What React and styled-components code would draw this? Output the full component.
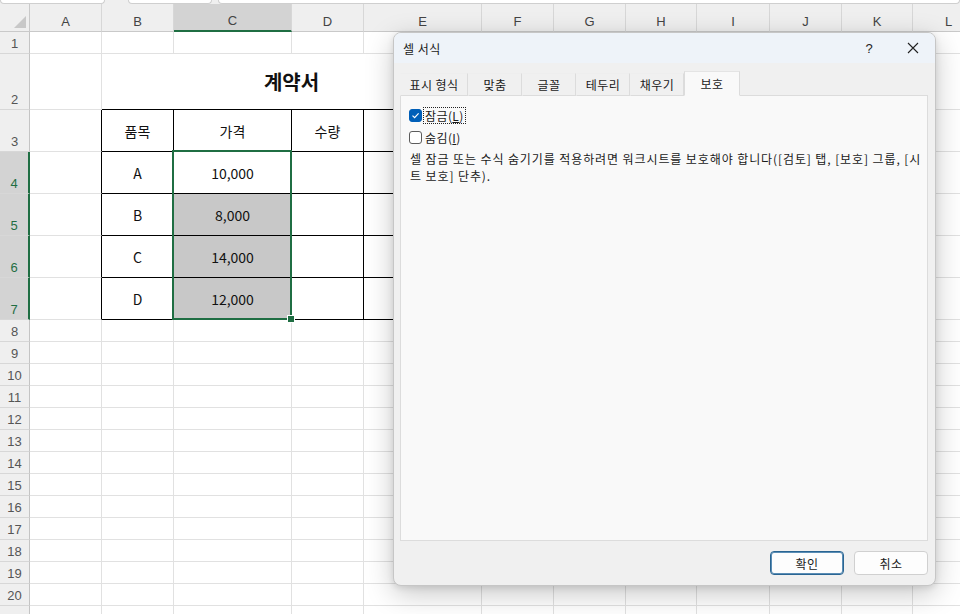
import styled, { createGlobalStyle } from 'styled-components';

const GlobalStyle = createGlobalStyle`
  html, body {
    margin: 0;
    padding: 0;
    background: #ffffff;
  }
  #root {
    width: 960px;
    height: 614px;
    overflow: hidden;
    position: relative;
  }
`;

const COLS = [
  { name: 'A', w: 72 },
  { name: 'B', w: 72 },
  { name: 'C', w: 118 },
  { name: 'D', w: 72 },
  { name: 'E', w: 118 },
  { name: 'F', w: 72 },
  { name: 'G', w: 72 },
  { name: 'H', w: 71 },
  { name: 'I', w: 73 },
  { name: 'J', w: 72 },
  { name: 'K', w: 71 },
  { name: 'L', w: 72 },
];

// row 21 is only partly in view, its number falls below the window
const ROWS = [22, 56, 42, 42, 42, 42, 42, 22, 22, 22, 22, 22, 22, 22, 22, 22, 22, 22, 22, 22, 22];
const VISIBLE_LABELS = 20;

const CELLS = {
  B3: '품목',
  C3: '가격',
  D3: '수량',
  B4: 'A',
  C4: '10,000',
  B5: 'B',
  C5: '8,000',
  B6: 'C',
  C6: '14,000',
  B7: 'D',
  C7: '12,000',
};

const GREY_FILL = ['C5', 'C6', 'C7'];

const Page = styled.div`
  width: 960px;
  height: 614px;
  position: relative;
  overflow: hidden;
  display: flex;
  flex-direction: column;
  background: #efefef;
`;

const Strip = styled.div`
  height: 4px;
  display: flex;
  gap: 6px;
  flex-shrink: 0;
`;

const Pill = styled.div`
  width: ${(p) => p.$w}px;
  flex: ${(p) => (p.$grow ? 1 : 'none')};
  margin-left: ${(p) => p.$ml || 0}px;
  background: #ffffff;
  border: 1px solid #cfcfcf;
  border-top: none;
  border-radius: 0 0 5px 5px;
  box-sizing: border-box;
`;

const Sheet = styled.div`
  display: grid;
  grid-template-columns: 30px ${COLS.map((c) => c.w + 'px').join(' ')};
  grid-template-rows: 28px ${ROWS.map((r) => r + 'px').join(' ')};
  font-family: 'Noto Sans CJK KR', 'Noto Sans', sans-serif;
  background: #ffffff;
`;

const Corner = styled.div`
  grid-row: 1;
  grid-column: 1;
  background: #efefef;
  border-right: 1px solid #c9c9c9;
  border-bottom: 1px solid #c9c9c9;
  box-sizing: border-box;
  display: flex;
  align-items: flex-end;
  justify-content: flex-end;
  padding: 0 3px 3px 0;
`;

const Triangle = styled.div`
  width: 0;
  height: 0;
  border-left: 12px solid transparent;
  border-bottom: 12px solid #c8c8c8;
`;

const ColHead = styled.div`
  grid-row: 1;
  grid-column: ${(p) => p.$c};
  background: ${(p) => (p.$active ? '#d3d3d3' : '#efefef')};
  border-right: 1px solid #d7d7d7;
  border-bottom: ${(p) => (p.$active ? '2px solid #1f6e43' : '1px solid #c9c9c9')};
  box-sizing: border-box;
  display: flex;
  align-items: center;
  justify-content: center;
  padding-top: 7px;
  font-family: 'Liberation Sans', 'Noto Sans', sans-serif;
  font-size: 13px;
  color: #444;
`;

const RowHead = styled.div`
  grid-row: ${(p) => p.$r};
  grid-column: 1;
  background: ${(p) => (p.$active ? '#d3d3d3' : '#efefef')};
  border-right: ${(p) => (p.$active ? '2px solid #1f6e43' : '1px solid #c4c4c4')};
  border-bottom: 1px solid #d7d7d7;
  box-sizing: border-box;
  display: flex;
  align-items: flex-end;
  justify-content: center;
  padding-bottom: 2px;
  font-family: 'Liberation Sans', 'Noto Sans', sans-serif;
  font-size: 13px;
  color: ${(p) => (p.$active ? '#1f6e43' : '#555')};
`;

const Cell = styled.div`
  grid-row: ${(p) => p.$r};
  grid-column: ${(p) => p.$c} / span ${(p) => p.$span || 1};
  background: ${(p) => p.$fill || '#ffffff'};
  border-right: 1px solid ${(p) => p.$right || '#e1e1e1'};
  border-bottom: 1px solid ${(p) => p.$bottom || '#e1e1e1'};
  box-sizing: border-box;
  display: flex;
  align-items: center;
  justify-content: center;
  font-size: ${(p) => (p.$title ? 20 : 14)}px;
  font-weight: ${(p) => (p.$title ? 700 : 400)};
  color: #111;
  white-space: nowrap;
`;

const Selection = styled.div`
  grid-column: 4;
  grid-row: 5 / 9;
  margin: -2px 0 0 -2px;
  border: 2px solid #1f6e43;
  position: relative;
  z-index: 1;
  pointer-events: none;
`;

const FillHandle = styled.div`
  position: absolute;
  right: -5px;
  bottom: -5px;
  width: 6px;
  height: 6px;
  background: #1f6e43;
  border: 1px solid #ffffff;
`;

/* dialog */

const Dialog = styled.div`
  position: absolute;
  left: 393px;
  top: 32px;
  width: 543px;
  height: 554px;
  box-sizing: border-box;
  background: #f0f0f0;
  border: 1px solid #c6c6c6;
  border-radius: 8px;
  box-shadow: 0 8px 28px rgba(0, 0, 0, 0.22), 0 2px 6px rgba(0, 0, 0, 0.1);
  display: flex;
  flex-direction: column;
  overflow: hidden;
  z-index: 2;
  font-family: 'Noto Sans CJK KR', 'Noto Sans', sans-serif;
  font-size: 12px;
  color: #1a1a1a;
`;

const TitleBar = styled.div`
  height: 30px;
  flex-shrink: 0;
  background: #eef3f9;
  display: flex;
  align-items: center;
  padding: 0 0 0 9px;
`;

const Title = styled.div`
  flex: 1;
  letter-spacing: 0.5px;
`;

const TitleButton = styled.div`
  width: 44px;
  height: 30px;
  display: flex;
  align-items: center;
  justify-content: center;
  font-family: 'Liberation Sans', sans-serif;
  font-size: 13px;
  color: #222;
`;

const Body = styled.div`
  flex: 1;
  display: flex;
  flex-direction: column;
  padding: 8px 7px 0 6px;
  min-height: 0;
`;

const Tabs = styled.div`
  display: flex;
  align-items: flex-end;
  height: 25px;
  position: relative;
  z-index: 1;
  margin-bottom: -1px;
`;

const Tab = styled.div`
  width: ${(p) => p.$w}px;
  height: ${(p) => (p.$active ? 25 : 23)}px;
  box-sizing: border-box;
  display: flex;
  align-items: center;
  justify-content: center;
  letter-spacing: 0.4px;
  background: ${(p) => (p.$active ? '#f9f9f9' : '#f0f0f0')};
  border: 1px solid ${(p) => (p.$active ? '#dcdcdc' : 'transparent')};
  border-right: 1px solid #dcdcdc;
  border-bottom: ${(p) => (p.$active ? '1px solid #f9f9f9' : '1px solid #dcdcdc')};
  border-top: 1px solid ${(p) => (p.$active ? '#e4e4e4' : '#eeeeee')};
  color: #1a1a1a;
`;

const Panel = styled.div`
  flex: 1;
  background: #f9f9f9;
  border: 1px solid #dcdcdc;
  padding: 8px 6px 0 8px;
`;

const CheckRow = styled.div`
  height: 22px;
  display: flex;
  align-items: center;
  gap: 2px;
`;

const Box = styled.div`
  width: 13px;
  height: 13px;
  box-sizing: border-box;
  border-radius: 3px;
  background: ${(p) => (p.$checked ? '#005fb8' : '#ffffff')};
  border: 1px solid ${(p) => (p.$checked ? '#005fb8' : '#5c5c5c')};
  display: flex;
  align-items: center;
  justify-content: center;
`;

const Label = styled.span`
  padding: 0 1px;
  line-height: 15px;
  letter-spacing: 0.4px;
  outline: ${(p) => (p.$focus ? '1px dotted #222' : 'none')};
`;

const Key = styled.span`
  text-decoration: underline;
`;

const Note = styled.p`
  margin: 2px 0 0 1px;
  line-height: 17px;
  width: 512px;
  letter-spacing: 0.9px;
  word-break: break-all;
`;

const Footer = styled.div`
  height: 44px;
  flex-shrink: 0;
  display: flex;
  justify-content: flex-end;
  gap: 10px;
  padding: 10px 7px 0 0;
  box-sizing: border-box;
`;

const Button = styled.button`
  width: 74px;
  height: 24px;
  box-sizing: border-box;
  background: #fdfdfd;
  border: 1px solid ${(p) => (p.$primary ? '#2a6592' : '#d0d0d0')};
  box-shadow: ${(p) => (p.$primary ? 'inset 0 0 0 1px #5a8db5' : 'none')};
  border-radius: 4px;
  font-family: 'Noto Sans CJK KR', sans-serif;
  font-size: 12px;
  letter-spacing: 0.5px;
  color: #1a1a1a;
  padding: 0;
`;

const TABS = [
  { label: '표시 형식', w: 68 },
  { label: '맞춤', w: 54 },
  { label: '글꼴', w: 54 },
  { label: '테두리', w: 54 },
  { label: '채우기', w: 54 },
  { label: '보호', w: 56, active: true },
];

function inTable(ci, row) {
  return ci >= 1 && ci <= 4 && row >= 3 && row <= 7;
}

function SheetGrid() {
  const items = [];
  items.push(
    <Corner key="corner">
      <Triangle />
    </Corner>
  );
  COLS.forEach((c, ci) => {
    items.push(
      <ColHead key={'h' + c.name} $c={ci + 2} $active={c.name === 'C'}>
        {c.name}
      </ColHead>
    );
  });

  ROWS.forEach((_, ri) => {
    const row = ri + 1;
    const gr = row + 1;
    items.push(
      <RowHead key={'r' + row} $r={gr} $active={row >= 4 && row <= 7}>
        {row <= VISIBLE_LABELS ? row : null}
      </RowHead>
    );
    COLS.forEach((c, ci) => {
      const ref = c.name + row;
      const gc = ci + 2;
      if (row === 2 && ci >= 2 && ci <= 4) return;
      if (row === 2 && ci === 1) {
        items.push(
          <Cell key={ref} $r={gr} $c={gc} $span={4} $title $bottom="#000">
            계약서
          </Cell>
        );
        return;
      }
      const right = inTable(ci, row) || (ci === 0 && row >= 3 && row <= 7) ? '#000' : undefined;
      const bottom = inTable(ci, row) ? '#000' : undefined;
      items.push(
        <Cell
          key={ref}
          $r={gr}
          $c={gc}
          $right={right}
          $bottom={bottom}
          $fill={GREY_FILL.includes(ref) ? '#c8c8c8' : undefined}
        >
          {CELLS[ref]}
        </Cell>
      );
    });
  });

  items.push(
    <Selection key="sel">
      <FillHandle />
    </Selection>
  );

  return <Sheet>{items}</Sheet>;
}

function Check() {
  return (
    <svg width="9" height="9" viewBox="0 0 9 9">
      <path d="M1.5 4.6 L3.6 6.6 L7.6 2.4" fill="none" stroke="#fff" strokeWidth="1.2" />
    </svg>
  );
}

function FormatDialog() {
  return (
    <Dialog>
      <TitleBar>
        <Title>셀 서식</Title>
        <TitleButton>?</TitleButton>
        <TitleButton>
          <svg width="12" height="12" viewBox="0 0 12 12">
            <path d="M1 1 L11 11 M11 1 L1 11" stroke="#222" strokeWidth="1.1" />
          </svg>
        </TitleButton>
      </TitleBar>
      <Body>
        <Tabs>
          {TABS.map((t) => (
            <Tab key={t.label} $w={t.w} $active={t.active}>
              {t.label}
            </Tab>
          ))}
        </Tabs>
        <Panel>
          <CheckRow>
            <Box $checked>
              <Check />
            </Box>
            <Label $focus>
              잠금(<Key>L</Key>)
            </Label>
          </CheckRow>
          <CheckRow>
            <Box />
            <Label>
              숨김(<Key>I</Key>)
            </Label>
          </CheckRow>
          <Note>
            셀 잠금 또는 수식 숨기기를 적용하려면 워크시트를 보호해야 합니다([검토] 탭, [보호] 그룹, [시트 보호] 단추).
          </Note>
        </Panel>
      </Body>
      <Footer>
        <Button $primary>확인</Button>
        <Button>취소</Button>
      </Footer>
    </Dialog>
  );
}

export default function App() {
  return (
    <Page>
      <GlobalStyle />
      <Strip>
        <Pill $w={105} />
        <Pill $w={84} $ml={17} />
        <Pill $grow />
      </Strip>
      <SheetGrid />
      <FormatDialog />
    </Page>
  );
}
